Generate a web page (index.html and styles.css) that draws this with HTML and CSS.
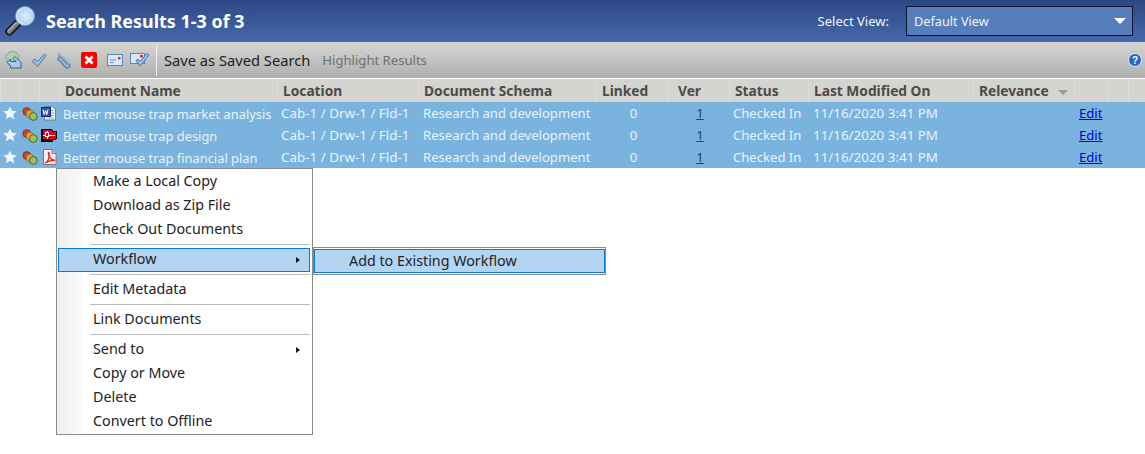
FILE: index.html
```html
<!DOCTYPE html>
<html lang="en">
<head>
<meta charset="utf-8">
<title>Search Results</title>
<link rel="stylesheet" href="styles.css">
</head>
<body>
<header class="titlebar">
  <svg class="logo" width="36" height="36" viewBox="0 0 36 36">
    <defs>
      <radialGradient id="lens" cx="0.55" cy="0.5" r="0.55"><stop offset="0" stop-color="#dceefc"/><stop offset="0.7" stop-color="#b5d6f2"/><stop offset="1" stop-color="#e4f1fb"/></radialGradient>
      <linearGradient id="handle" x1="0" y1="0" x2="1" y2="1"><stop offset="0" stop-color="#e0e0e0"/><stop offset="0.5" stop-color="#888"/><stop offset="1" stop-color="#333"/></linearGradient>
    </defs>
    <path d="M12 21 L4.500 28.500" stroke="#111" stroke-width="8" stroke-linecap="round"/>
    <path d="M12 21 L4.500 28.500" stroke="url(#handle)" stroke-width="5" stroke-linecap="round"/>
    <circle cx="20" cy="13" r="9.500" fill="url(#lens)" stroke="#6f9ad0" stroke-width="0.800"/>
  </svg>
  <h1 class="title">Search Results 1-3 of 3</h1>
  <span class="view-label">Select View:</span>
  <div class="view-select"><span>Default View</span><i class="caret"></i></div>
</header>
<div class="toolbar">
  <div class="tool-icons">
    <svg width="18" height="18" viewBox="0 0 18 18"><circle cx="7.500" cy="7" r="6.500" fill="#afcfa6" stroke="#84a0a8"/><path d="M10 5.500l6 6v5.500h-10.500v-2.500l-3.500-3 3.500-3.500v2.500h5.500l-3-3z" fill="#a6cbee" stroke="#2d5c98"/></svg>
    <svg width="16" height="16" viewBox="0 0 16 16"><path d="M1.500 9l2.500-2 2.500 3 7-8 1.500 1.500-8.500 11z" fill="#a3c3ea" stroke="#466fae"/></svg>
    <svg width="17" height="18" viewBox="0 0 17 18"><path d="M2 2.500l11 10.500c2.500 3-1.500 5-3.500 3l-7-7.500c-1-1.500 1-3.500 2.500-2l6.500 7" fill="none" stroke="#5f89bb" stroke-width="1.800"/><path d="M2 2.500l11 10.500" stroke="#d9e7f5" stroke-width="0.700"/></svg>
    <svg width="16" height="16" viewBox="0 0 16 16"><rect width="16" height="16" rx="2" fill="#f00"/><path d="M3.500 5.500l2-2 2.500 2.500 2.500-2.500 2 2-2.500 2.500 2.500 2.500-2 2-2.500-2.500-2.500 2.500-2-2 2.500-2.500z" fill="#fff"/></svg>
    <svg width="16" height="12" viewBox="0 0 16 12"><rect x="0.500" y="0.500" width="15" height="11" fill="#d8e8f7" stroke="#5585bd"/><path d="M3 6h6M3 8.500h4" stroke="#6f93bd"/><rect x="11" y="3" width="2.500" height="2.500" fill="#e0322a"/></svg>
    <svg width="20" height="16" viewBox="0 0 20 16"><rect x="0.500" y="1.500" width="14" height="10" fill="#d8e8f7" stroke="#5585bd"/><rect x="10" y="3" width="3" height="2.500" fill="#e0322a"/><path d="M6 8.500l2-1.500 2 2.500 7-8 2 1.500-9 11z" fill="#a3c3ea" stroke="#466fae"/></svg>
  </div>
  <span class="tool-divider"></span>
  <a class="tool-action">Save as Saved Search</a>
  <a class="tool-action disabled">Highlight Results</a>
  <svg class="help" width="14" height="14" viewBox="0 0 14 14"><circle cx="7" cy="7" r="6.500" fill="#2c66c4" stroke="#e5eef9"/><text x="7" y="10.500" text-anchor="middle" class="help-mark">?</text></svg>
</div>
<table class="results">
  <colgroup>
    <col class="c-a"><col class="c-b"><col class="c-c"><col class="c-name"><col class="c-loc"><col class="c-schema"><col class="c-linked"><col class="c-ver"><col class="c-status"><col class="c-mod"><col class="c-rel"><col class="c-edit"><col class="c-x"><col>
  </colgroup>
  <thead>
    <tr>
      <th></th><th></th><th></th>
      <th>Document Name</th><th>Location</th><th>Document Schema</th><th>Linked</th><th class="ctr-h">Ver</th><th>Status</th><th>Last Modified On</th>
      <th>Relevance <i class="sort"></i></th><th></th><th></th><th></th>
    </tr>
  </thead>
  <tbody>
    <tr>
      <td class="ic"><svg width="14" height="14" viewBox="0 0 14 14"><use href="#star"/></svg></td>
      <td class="ic"><svg width="18" height="16" viewBox="0 0 18 16"><use href="#dots"/></svg></td>
      <td class="ic"><svg width="16" height="16" viewBox="0 0 16 16"><path d="M3.500 1.500h8l3 3v10.500h-11z" fill="#eef4fb" stroke="#6d7f99"/><path d="M10 5.500h3M10 8h3M10 10.500h3M6 13h7" stroke="#98a9c0"/><rect x="0.500" y="2.500" width="9" height="9" fill="#2b55a8" stroke="#15306b"/><path d="M2 4.500l1.200 5 1.300-4 1.300 4 1.200-5" fill="none" stroke="#fff"/></svg></td>
      <td class="t-name">Better mouse trap market analysis</td><td class="t-wide">Cab-1 / Drw-1 / Fld-1</td><td class="p5">Research and development</td><td class="num">0</td><td class="num"><a class="ver">1</a></td><td>Checked In</td><td class="p5 t-wide">11/16/2020 3:41 PM</td><td></td><td class="ed"><a class="edit">Edit</a></td><td></td><td></td>
    </tr>
    <tr>
      <td class="ic"><svg width="14" height="14" viewBox="0 0 14 14"><use href="#star"/></svg></td>
      <td class="ic"><svg width="18" height="16" viewBox="0 0 18 16"><use href="#dots"/></svg></td>
      <td class="ic"><svg width="16" height="13" viewBox="0 0 16 13" shape-rendering="crispEdges"><path d="M0 0h11v1h1v1h4v8h-1v1h-3v2h-12z" fill="#000"/><path d="M2 1h9v2h4v7h-13v-1h-0z" fill="#e8001c"/><path d="M2 6h3M8 6h6M6 2v2M6 8v2" stroke="#fff"/><path d="M4.500 3.500h3v4h-3z" fill="none" stroke="#fff"/></svg></td>
      <td class="t-name">Better mouse trap design</td><td class="t-wide">Cab-1 / Drw-1 / Fld-1</td><td class="p5">Research and development</td><td class="num">0</td><td class="num"><a class="ver">1</a></td><td>Checked In</td><td class="p5 t-wide">11/16/2020 3:41 PM</td><td></td><td class="ed"><a class="edit">Edit</a></td><td></td><td></td>
    </tr>
    <tr>
      <td class="ic"><svg width="14" height="14" viewBox="0 0 14 14"><use href="#star"/></svg></td>
      <td class="ic"><svg width="18" height="16" viewBox="0 0 18 16"><use href="#dots"/></svg></td>
      <td class="ic"><svg width="15" height="16" viewBox="0 0 15 16"><path d="M1.500 0.500h8.500l4 4v11h-12.500z" fill="#f4eeee" stroke="#8a6d6d"/><path d="M10 .5v4h4" fill="#cfc5c5" stroke="#8a6d6d"/><path d="M3 14c3-1 5-6 4-10-.4-1.500-1.200 0 0 3 1 2.500 3 4 6 4.500-3-.5-7 .5-10 2.500z" fill="none" stroke="#e2231a" stroke-width="1.300"/></svg></td>
      <td class="t-name">Better mouse trap financial plan</td><td class="t-wide">Cab-1 / Drw-1 / Fld-1</td><td class="p5">Research and development</td><td class="num">0</td><td class="num"><a class="ver">1</a></td><td>Checked In</td><td class="p5 t-wide">11/16/2020 3:41 PM</td><td></td><td class="ed"><a class="edit">Edit</a></td><td></td><td></td>
    </tr>
  </tbody>
</table>
<svg class="defs" width="0" height="0" aria-hidden="true">
  <defs>
    <path id="star" d="M7 .4l2 4.300 4.700.6-3.500 3.200 1 4.700-4.200-2.400-4.200 2.400 1-4.700-3.500-3.200 4.700-.6z" fill="#eef5fc"/>
    <g id="dots">
      <circle cx="6.700" cy="6.500" r="3.900" fill="#dc3a1c" stroke="#6d3a2a" stroke-width=".8"/>
      <circle cx="10" cy="9" r="3.900" fill="#e3a63a" stroke="#7d6a3a" stroke-width=".8"/>
      <circle cx="13.300" cy="11.500" r="3.900" fill="#9cc05c" stroke="#3f5a3a" stroke-width=".9"/>
    </g>
  </defs>
</svg>
<nav class="menu">
  <div class="mi">Make a Local Copy</div>
  <div class="mi">Download as Zip File</div>
  <div class="mi">Check Out Documents</div>
  <div class="sep"></div>
  <div class="mi active">Workflow<i class="arrow"></i></div>
  <div class="sep"></div>
  <div class="mi">Edit Metadata</div>
  <div class="sep"></div>
  <div class="mi">Link Documents</div>
  <div class="sep"></div>
  <div class="mi">Send to<i class="arrow"></i></div>
  <div class="mi">Copy or Move</div>
  <div class="mi">Delete</div>
  <div class="mi">Convert to Offline</div>
</nav>
<nav class="submenu"><div class="mi active">Add to Existing Workflow</div></nav>
</body>
</html>
```
FILE: styles.css
```css
* { box-sizing: border-box; }
html, body { margin: 0; padding: 0; }
body {
  width: 1145px;
  height: 454px;
  overflow: hidden;
  position: relative;
  background: #fff;
  font-family: "Noto Sans", "DejaVu Sans", sans-serif;
  font-size: 13.1px;
  color: #222;
}
.titlebar {
  height: 42px;
  display: flex;
  align-items: center;
  background: linear-gradient(#2c4884, #4769ab);
  color: #fff;
  padding-left: 5px;
}
.logo { flex: none; margin-right: 5px; }
.title {
  margin: 0;
  font-size: 17.95px;
  font-weight: 700;
  flex: 1;
}
.view-label { font-size: 13px; color: #f0f4fb; margin-right: 17px; }
.view-select {
  width: 227px;
  height: 30px;
  margin-right: 12px;
  background: #567dba;
  border: 1px solid #0c1428;
  display: flex;
  align-items: center;
  justify-content: space-between;
  padding: 0 6px 0 7px;
  color: #eef3fb;
  font-size: 12.7px;
}
.caret {
  border-left: 6px solid transparent;
  border-right: 6px solid transparent;
  border-top: 6px solid #fff;
}
.toolbar {
  height: 37px;
  display: flex;
  align-items: center;
  background: linear-gradient(#d6d6d4, #aeaeac);
  padding-left: 5px;
  border-bottom: 1px solid #fff;
}
.tool-icons {
  display: grid;
  grid-template-columns: 26px 25px 25px 26px 23px 26px;
  align-items: center;
  width: 151px;
}
.tool-divider { width: 1px; height: 31px; background: #f4f4f4; margin-right: 7px; }
.tool-action { font-size: 14.7px; color: #1e1e1e; margin-right: 12px; }
.tool-action.disabled { font-size: 13.1px; color: #707070; }
.help { margin-left: auto; margin-right: 3px; }
.help-mark { font: 700 10px "Liberation Sans", sans-serif; fill: #fff; }
.results { width: 1145px; border-collapse: separate; border-spacing: 0; table-layout: fixed; }
.c-a { width: 19px; } .c-b { width: 20px; } .c-c { width: 20px; }
.c-name { width: 218px; } .c-loc { width: 141px; } .c-schema { width: 178px; }
.c-linked { width: 72px; } .c-ver { width: 61px; } .c-status { width: 79px; }
.c-mod { width: 165px; } .c-rel { width: 101px; } .c-edit { width: 34px; } .c-x { width: 20px; }
th {
  height: 23px;
  padding: 0 0 0 5px;
  background: #d4d4d1;
  border-left: 1px solid #dcdcda;
  color: #4d4a48;
  font-size: 13.75px;
  font-weight: 700;
  text-align: left;
  white-space: nowrap;
  overflow: hidden;
}
th.ctr-h { padding-left: 9px; }
.sort {
  display: inline-block;
  margin-left: 6px;
  vertical-align: 1px;
  border-left: 5px solid transparent;
  border-right: 5px solid transparent;
  border-top: 5px solid #9a9a98;
}
tbody tr { height: 22px; background: #7ab4de; color: #e9f2fa; }
td { padding: 2px 0 0 4px; white-space: nowrap; overflow: hidden; line-height: 1; }
td.t-name { font-size: 12.9px; }
td.t-wide { font-size: 13.4px; }
td.p5 { padding-left: 5px; }
td.ic { padding: 0; text-align: center; }
td.ic svg { display: block; margin: 0 auto; }
td.num { padding: 2px 0 0 3px; text-align: center; }
.ver { color: #1d3f6e; text-decoration: underline; }
.edit { color: #0000e6; text-decoration: underline; }
td.ed { padding-left: 5px; overflow: visible; }
.defs { position: absolute; }
.menu {
  position: absolute;
  left: 56px;
  top: 168px;
  width: 257px;
  height: 267px;
  padding: 1px 1px 2px;
  background: linear-gradient(90deg, #f0f0f0, #f9f9f9 24px, #fff 25px);
  border: 1px solid #8a8a8a;
  color: #222;
  font-size: 14.3px;
}
.mi {
  height: 24px;
  line-height: 22px;
  padding-left: 35px;
  position: relative;
  margin-right: 1px;
}
.mi.active {
  background: #b3d5f2;
  border: 1px solid #0a78d7;
  line-height: 20px;
  padding-left: 34px;
}
.sep { height: 6px; margin: 0 1px 0 32px; background: linear-gradient(#bbb, #bbb) 0 2px / 100% 1px no-repeat; }
.arrow {
  position: absolute;
  right: 9px;
  top: 8px;
  border-left: 4px solid #111;
  border-top: 3px solid transparent;
  border-bottom: 3px solid transparent;
}
.menu > .mi:nth-child(11) .arrow { right: 10px; top: 9px; }
.submenu {
  position: absolute;
  left: 313px;
  top: 247px;
  width: 293px;
  height: 28px;
  padding: 1px 0;
  background: #fff;
  border: 1px solid #8a8a8a;
  color: #222;
  font-size: 14.3px;
}
.submenu .mi { margin: 0; padding-left: 34px; line-height: 22px; }
```
